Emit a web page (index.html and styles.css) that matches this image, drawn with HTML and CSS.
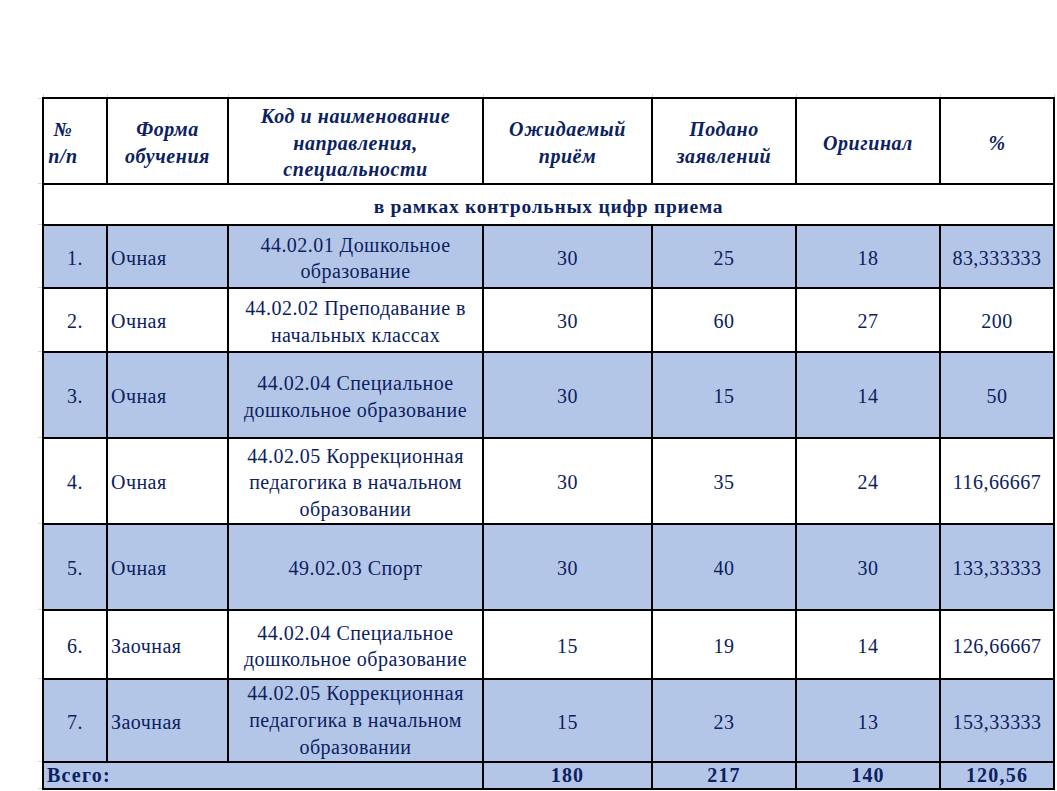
FILE: index.html
```html
<!DOCTYPE html>
<html lang="ru">
<head>
<meta charset="utf-8">
<title>Приём</title>
<link rel="stylesheet" href="styles.css">
</head>
<body>
<table class="sheet">
  <colgroup>
    <col class="c-stub">
    <col class="c-num">
    <col class="c-form">
    <col class="c-code">
    <col class="c-plan">
    <col class="c-app">
    <col class="c-orig">
    <col class="c-pct">
  </colgroup>
  <tr class="r-stub">
    <td class="corner"></td>
    <td class="stub-top"></td><td class="stub-top"></td><td class="stub-top"></td><td class="stub-top"></td><td class="stub-top"></td><td class="stub-top"></td><td class="stub-top"></td>
  </tr>
  <tr class="r-head">
    <td class="stub-left"></td>
    <th class="h-num">№<br>п/п</th>
    <th>Форма<br>обучения</th>
    <th>Код и наименование<br>направления,<br>специальности</th>
    <th>Ожидаемый<br>приём</th>
    <th>Подано<br>заявлений</th>
    <th>Оригинал</th>
    <th>%</th>
  </tr>
  <tr class="r-sec">
    <td class="stub-left"></td>
    <td class="section" colspan="7">в рамках контрольных цифр приема</td>
  </tr>
  <tr class="r-63 blue">
    <td class="stub-left"></td>
    <td class="num">1.</td><td class="form">Очная</td><td class="code">44.02.01 Дошкольное<br>образование</td>
    <td>30</td><td>25</td><td>18</td><td>83,333333</td>
  </tr>
  <tr class="r-64">
    <td class="stub-left"></td>
    <td class="num">2.</td><td class="form">Очная</td><td class="code">44.02.02 Преподавание в<br>начальных классах</td>
    <td>30</td><td>60</td><td>27</td><td>200</td>
  </tr>
  <tr class="r-86 blue">
    <td class="stub-left"></td>
    <td class="num">3.</td><td class="form">Очная</td><td class="code">44.02.04 Специальное<br>дошкольное образование</td>
    <td>30</td><td>15</td><td>14</td><td>50</td>
  </tr>
  <tr class="r-86">
    <td class="stub-left"></td>
    <td class="num">4.</td><td class="form">Очная</td><td class="code">44.02.05 Коррекционная<br>педагогика в начальном<br>образовании</td>
    <td>30</td><td>35</td><td>24</td><td>116,66667</td>
  </tr>
  <tr class="r-86 blue">
    <td class="stub-left"></td>
    <td class="num">5.</td><td class="form">Очная</td><td class="code">49.02.03 Спорт</td>
    <td>30</td><td>40</td><td>30</td><td>133,33333</td>
  </tr>
  <tr class="r-69">
    <td class="stub-left"></td>
    <td class="num">6.</td><td class="form">Заочная</td><td class="code">44.02.04 Специальное<br>дошкольное образование</td>
    <td>15</td><td>19</td><td>14</td><td>126,66667</td>
  </tr>
  <tr class="r-80 blue">
    <td class="stub-left"></td>
    <td class="num">7.</td><td class="form">Заочная</td><td class="code">44.02.05 Коррекционная<br>педагогика в начальном<br>образовании</td>
    <td>15</td><td>23</td><td>13</td><td>153,33333</td>
  </tr>
  <tr class="r-27 blue total">
    <td class="stub-left"></td>
    <td class="total-label" colspan="3">Всего:</td>
    <td>180</td><td>217</td><td>140</td><td>120,56</td>
  </tr>
</table>
</body>
</html>
```
FILE: styles.css
```css
html, body {
  margin: 0;
  padding: 0;
  background: #ffffff;
}

body {
  font-family: "Liberation Serif", "Times New Roman", serif;
  color: #0b2160;
  overflow: hidden;
  height: 791px;
}

.sheet {
  border-collapse: collapse;
  table-layout: fixed;
  width: 1016px;
  margin: 94px 0 0 38px;
  font-size: 20px;
  letter-spacing: 0.45px;
}

.c-stub { width: 5px; }
.c-num  { width: 64px; }
.c-form { width: 121px; }
.c-code { width: 255px; }
.c-plan { width: 169px; }
.c-app  { width: 144px; }
.c-orig { width: 144px; }
.c-pct  { width: 114px; }

.sheet td,
.sheet th {
  border: 2px solid #000000;
  padding: 4px 0 0 0;
  text-align: center;
  vertical-align: middle;
  line-height: 26.5px;
  white-space: nowrap;
  overflow: hidden;
}

.sheet th {
  font-weight: bold;
  font-style: italic;
  font-size: 20px;
  letter-spacing: 0.55px;
}

.sheet td.corner {
  border: none;
  padding: 0;
}

.sheet td.stub-top {
  border-top: none;
  border-left: 1px solid #d4d4d4;
  border-right: 1px solid #d4d4d4;
  padding: 0;
}

.sheet td.stub-left {
  border-left: none;
  border-top: 1px solid #d4d4d4;
  border-bottom: 1px solid #d4d4d4;
  background: #ffffff;
  padding: 0;
}

.r-stub { height: 4px; }
.r-head { height: 85px; }
.r-sec  { height: 41px; }
.r-63   { height: 63px; }
.r-64   { height: 64px; }
.r-86   { height: 86px; }
.r-69   { height: 69px; }
.r-80   { height: 80px; }
.r-27   { height: 27px; }

.sheet th.h-num {
  padding-right: 24px;
}

.sheet td.section {
  font-weight: bold;
  font-size: 19.5px;
  letter-spacing: 0.75px;
  padding-top: 6px;
}

.blue td {
  background: #b4c6e7;
}

.sheet td.form {
  text-align: left;
  padding-left: 3px;
}

.r-80 td.code {
  vertical-align: bottom;
  line-height: 27px;
  padding-top: 0;
}

.total td {
  font-weight: bold;
  font-size: 20px;
  letter-spacing: 1.2px;
  line-height: 23px;
  padding-top: 0;
}

.sheet td.total-label {
  text-align: left;
  padding-left: 3px;
}
```
